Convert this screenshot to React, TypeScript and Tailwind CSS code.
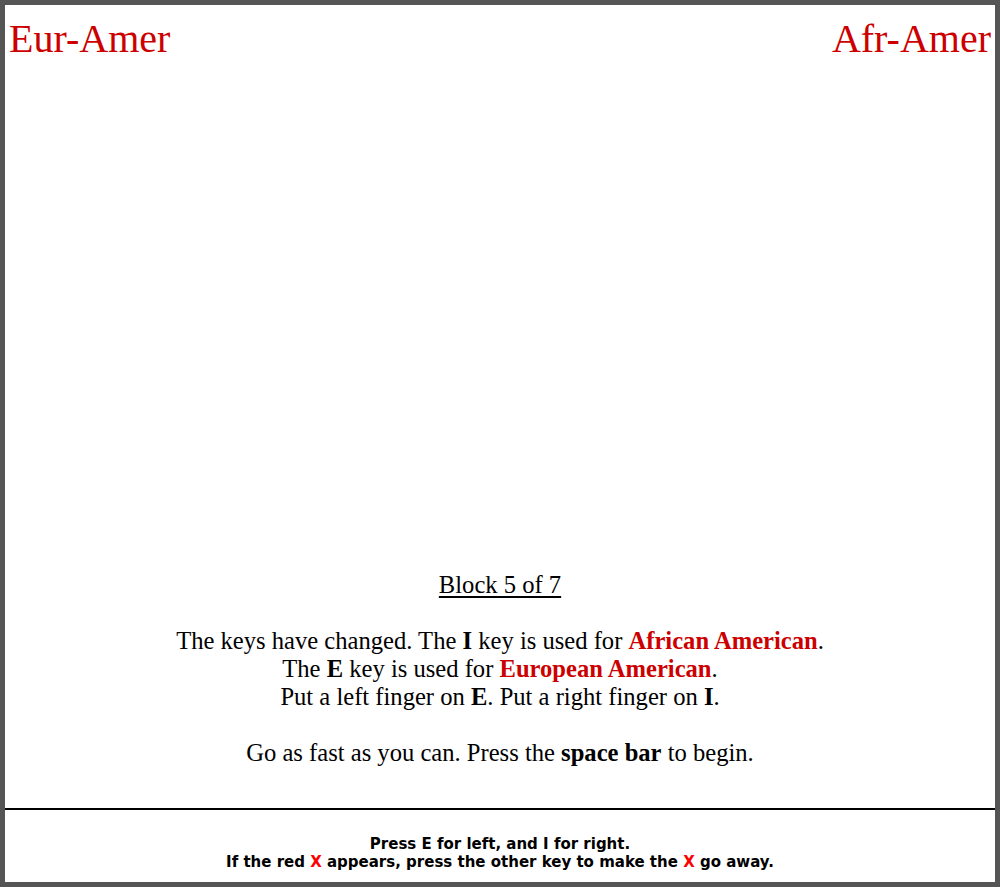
export default function App() {
  const serif = { fontFamily: '"Liberation Serif", "Times New Roman", serif' }
  return (
    <div className="h-[887px] w-[1000px] border-[5px] border-[#555555] bg-white flex flex-col" style={serif}>
      <div className="flex justify-between px-[4px] pt-[11px] text-[40px] leading-[46px] text-[#cc0000]">
        <span>Eur-Amer</span>
        <span>Afr-Amer</span>
      </div>

      <div className="flex-1 flex flex-col justify-end pb-[41px] text-center text-[24.6px] leading-[28px] text-black">
        <p>
          <span className="underline underline-offset-[3px]">Block 5 of 7</span>
          <br />
          <br />
          The keys have changed. The <b>I</b> key is used for{' '}
          <b className="text-[#cc0000]">African American</b>.
          <br />
          The <b>E</b> key is used for <b className="text-[#cc0000]">European American</b>.
          <br />
          Put a left finger on <b>E</b>. Put a right finger on <b>I</b>.
          <br />
          <br />
          Go as fast as you can. Press the <b>space bar</b> to begin.
        </p>
      </div>

      <div className="border-t-2 border-black" />

      <div
        className="pt-[25px] pb-[11px] text-center text-[15px] leading-[18px] font-bold text-black"
        style={{ fontFamily: '"DejaVu Sans", Verdana, sans-serif' }}
      >
        <p>Press E for left, and I for right.</p>
        <p>
          If the red <span className="text-[#ff0000]">X</span> appears, press the other key to make the{' '}
          <span className="text-[#ff0000]">X</span> go away.
        </p>
      </div>
    </div>
  )
}
